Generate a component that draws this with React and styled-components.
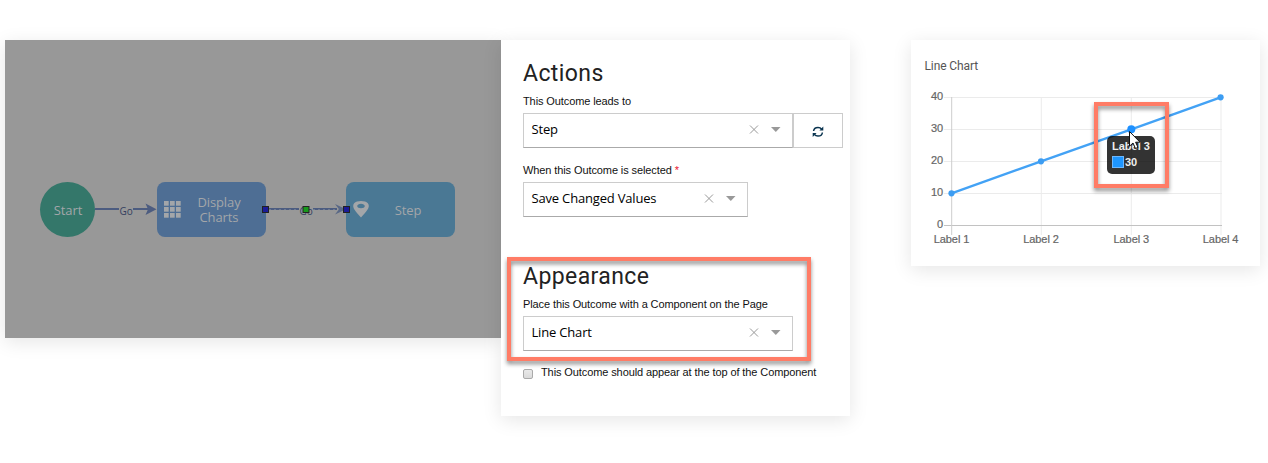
import React from 'react';
import styled, { createGlobalStyle } from 'styled-components';

const GlobalStyle = createGlobalStyle`
  *, *::before, *::after { box-sizing: border-box; }
  body { margin: 0; background: #fff; overflow: hidden; }
`;

const Page = styled.main`
  display: flex;
  align-items: flex-start;
  width: 1268px;
  height: 463px;
  padding: 40px 8px 0 5px;
`;

const Canvas = styled.section`
  position: relative;
  flex: none;
  width: 496px;
  height: 298px;
  background: #989898;
  box-shadow: 0 4px 18px rgba(0, 0, 0, 0.1);
`;

const Node = styled.div`
  position: absolute;
  top: 142px;
  left: ${(p) => p.$x}px;
  width: ${(p) => p.$w}px;
  height: 55px;
  display: flex;
  align-items: center;
  padding-left: ${(p) => (p.$round ? 1 : 7)}px;
  border-radius: ${(p) => (p.$round ? '50%' : '8px')};
  background: ${(p) => p.$color};
  color: #a3a6a9;
  font: 13px/15px 'Open Sans', sans-serif;
  letter-spacing: -0.1px;
`;

const NodeLabel = styled.span`
  flex: 1;
  text-align: center;
  padding: ${(p) => p.$drop || 0}px ${(p) => p.$end || 0}px 0 0;
`;

const Links = styled.svg`
  position: absolute;
  inset: 0;
`;

const FormPanel = styled.section`
  position: relative;
  flex: none;
  display: flex;
  flex-direction: column;
  align-items: flex-start;
  width: 349px;
  height: 376px;
  padding: 19px 7px 0 22px;
  background: #fff;
  box-shadow: 0 4px 18px rgba(0, 0, 0, 0.1);
`;

const Heading = styled.h2`
  margin: ${(p) => p.$top || 0}px 0 0;
  height: 30px;
  font: 400 23px/30px Roboto, sans-serif;
  letter-spacing: 0.4px;
  color: #222;
`;

const FieldLabel = styled.label`
  margin-top: ${(p) => p.$top}px;
  font: 11px/14px 'Liberation Sans', Arial, sans-serif;
  letter-spacing: -0.1px;
  color: #111;
  white-space: nowrap;
`;

const Required = styled.span`
  color: #e8112d;
`;

const FieldRow = styled.div`
  display: flex;
  margin-top: 5px;
`;

const Select = styled.div`
  display: flex;
  align-items: center;
  width: ${(p) => p.$w}px;
  height: 35px;
  padding: 0 11px 2px 7.5px;
  border: 1px solid #ccc;
  border-bottom-color: #aaa;
  background: #fff;
  color: #000;
  font: 13px/18px 'Open Sans', sans-serif;
  letter-spacing: -0.18px;
`;

const SelectValue = styled.span`
  flex: 1;
  padding-bottom: 1px;
`;

const RefreshButton = styled.button`
  display: flex;
  align-items: center;
  justify-content: center;
  width: 50px;
  height: 35px;
  padding: 2px 0 0;
  border: 1px solid #ccc;
  background: #fff;
`;

const CheckRow = styled.label`
  display: flex;
  align-items: flex-start;
  gap: 8px;
  margin-top: 14px;
  font: 11px/14px 'Liberation Sans', Arial, sans-serif;
  letter-spacing: -0.1px;
  color: #111;
  white-space: nowrap;
`;

const Box = styled.span`
  width: 10px;
  height: 10px;
  margin-top: 4px;
  border: 1px solid #aaa;
  border-radius: 2px;
  background: linear-gradient(#e9e9e9, #dadada);
`;

const Highlight = styled.div`
  position: absolute;
  left: ${(p) => p.$x}px;
  top: ${(p) => p.$y}px;
  width: ${(p) => p.$w}px;
  height: ${(p) => p.$h}px;
  border: 4px solid #ff7c66;
  filter: drop-shadow(0 3px 2px rgba(0, 0, 0, 0.45));
  pointer-events: none;
`;

const ChartCard = styled.section`
  position: relative;
  flex: none;
  width: 349px;
  height: 226px;
  margin-left: 61px;
  padding: 18px 0 0 13.5px;
  background: #fff;
  box-shadow: 0 4px 18px rgba(0, 0, 0, 0.1);
`;

const ChartTitle = styled.h3`
  margin: 0;
  font: 400 12px/16px Roboto, sans-serif;
  letter-spacing: -0.1px;
  color: #555;
`;

const Plot = styled.svg`
  display: block;
  margin-left: -13.5px;
  text {
    font: 11px 'Liberation Sans', Arial, sans-serif;
    letter-spacing: -0.08px;
    fill: #666;
    stroke: #666;
    stroke-width: 0.2px;
  }
`;

const Tooltip = styled.div`
  position: absolute;
  left: 196px;
  top: 95.5px;
  width: 48px;
  height: 38px;
  padding: 4px 5px;
  border-radius: 5px;
  background: rgba(0, 0, 0, 0.8);
  color: #eee;
  font: bold 11px/13px 'Liberation Sans', Arial, sans-serif;
  white-space: nowrap;
`;

const TooltipRow = styled.div`
  display: flex;
  align-items: center;
  gap: 1px;
  margin-top: 3px;
`;

const Swatch = styled.span`
  width: 12px;
  height: 12px;
  border: 1px solid #6cb8ff;
  background: #1e96ff;
`;

const Cursor = styled.svg`
  position: absolute;
  left: 217px;
  top: 90px;
`;

function SelectField({ width, children }) {
  return (
    <Select $w={width}>
      <SelectValue>{children}</SelectValue>
      <svg width="32" height="12" viewBox="0 0 32 12">
        <path d="M1 1.500l8 8M9 1.500l-8 8" stroke="#999" fill="none" />
        <path d="M22 3h9.5L26.8 8z" fill="#999" />
      </svg>
    </Select>
  );
}

const GridIcon = () => (
  <svg width="17" height="17" viewBox="0 0 17 17" fill="#a3a6a9">
    {[0, 6, 12].map((y) =>
      [0, 6, 12].map((x) => <rect key={`${x}-${y}`} x={x} y={y} width="4.7" height="4.7" />)
    )}
  </svg>
);

const PinIcon = () => (
  <svg width="16" height="17" viewBox="0 0 16 17">
    <path
      fillRule="evenodd"
      fill="#a3a6a9"
      d="M4 .5Q8-.3 12 .5Q15.8 1.5 15.8 5C15.8 8.3 11.5 12.5 8 16.5C4.5 12.5.2 8.3.2 5Q.2 1.5 4 .5ZM8 2.7C6 2.7 4.2 3.7 4.2 5S6 7.3 8 7.3 11.8 6.3 11.8 5 10 2.7 8 2.7Z"
    />
  </svg>
);

const RefreshIcon = () => (
  <svg width="12" height="12" viewBox="0 0 12 12" fill="none" stroke="#0b3550" strokeWidth="1.5">
    <path d="M1.600 5C1.800 2.800 3.800 1.400 6 1.400c1.500 0 2.800.6 3.600 1.700M10.400 6.500C10.200 8.700 8.200 10.100 6 10.100c-1.500 0-2.800-.6-3.600-1.700" />
    <path d="M11.300.5v4H7.400zM.7 11v-4h3.900z" fill="#0b3550" stroke="none" />
  </svg>
);

const POINTS = [
  [40.5, 153.3],
  [130, 121.3],
  [220.3, 89.3],
  [309.6, 57.3],
];

function LineChart() {
  return (
    <Plot width="349" height="192" viewBox="0 34 349 192">
      <g stroke="#ebebeb">
        {[57.5, 89.5, 121.5, 153.5].map((y) => <path key={y} d={`M33 ${y}H311`} />)}
        {[130.3, 220.3, 310].map((x) => <path key={x} d={`M${x} 57V195`} />)}
      </g>
      <path d="M33 185.500H311" stroke="#c2c2c2" />
      <path d="M40.700 57V195" stroke="#cdcdcd" />
      <polyline points={POINTS.join(' ')} fill="none" stroke="#43a2f5" strokeWidth="2.4" />
      {POINTS.map(([x, y], i) => (
        <circle key={x} cx={x} cy={y} r={i === 2 ? 4 : 3.1} fill={i === 2 ? '#1e90ff' : '#3d9df2'} />
      ))}
      {[40, 30, 20, 10, 0].map((n, i) => (
        <text key={n} x="32" y={60 + i * 32} textAnchor="end">{n}</text>
      ))}
      {POINTS.map(([x], i) => (
        <text key={x} x={x} y="203" textAnchor="middle">{`Label ${i + 1}`}</text>
      ))}
    </Plot>
  );
}

export default function App() {
  return (
    <Page>
      <GlobalStyle />
      <Canvas>
        <Node $x={35} $w={55} $round $color="#34776a">
          <NodeLabel $drop={2}>Start</NodeLabel>
        </Node>
        <Node $x={152} $w={109} $color="#4e6e94">
          <GridIcon />
          <NodeLabel $end={9}>Display<br />Charts</NodeLabel>
        </Node>
        <Node $x={341} $w={109} $color="#4a7894">
          <PinIcon />
          <NodeLabel $drop={2} $end={8}>Step</NodeLabel>
        </Node>
        <Links width="496" height="298">
          <g fill="none" stroke="#4c5c80" strokeWidth="2">
            <path d="M90 169H114M128 169H143" />
            <path d="M262 169H294M308 169H332" strokeWidth="1.8" />
          </g>
          <path d="M264 169.500H294M308 169.500H339" stroke="#7b8598" strokeWidth=".7" strokeDasharray="2 3" />
          <path d="M140.500 163.500L151.500 169.200L140.500 175L143 169.200Z" fill="#4c5c80" />
          <path d="M330 164L341 169.200L330 174.500L334 169.200Z" fill="#596886" />
          <g fill="#343f60" fontFamily="Open Sans, sans-serif" fontSize="10">
            <text x="114.500" y="175">Go</text>
            <text x="294.500" y="175">Go</text>
          </g>
          <g stroke="#222">
            <rect x="257.500" y="166.500" width="6" height="6" fill="#1b1b98" />
            <rect x="338.500" y="166.500" width="6" height="6" fill="#1b1b98" />
            <rect x="298" y="166.500" width="6" height="6" fill="#17981b" />
          </g>
        </Links>
      </Canvas>

      <FormPanel>
        <Heading>Actions</Heading>
        <FieldLabel $top={5}>This Outcome leads to</FieldLabel>
        <FieldRow>
          <SelectField width={270}>Step</SelectField>
          <RefreshButton aria-label="Refresh"><RefreshIcon /></RefreshButton>
        </FieldRow>
        <FieldLabel $top={15}>When this Outcome is selected <Required>*</Required></FieldLabel>
        <FieldRow>
          <SelectField width={225}>Save Changed Values</SelectField>
        </FieldRow>
        <Heading $top={45}>Appearance</Heading>
        <FieldLabel $top={5}>Place this Outcome with a Component on the Page</FieldLabel>
        <FieldRow>
          <SelectField width={270}>Line Chart</SelectField>
        </FieldRow>
        <CheckRow><Box />This Outcome should appear at the top of the Component</CheckRow>
        <Highlight $x={6} $y={217} $w={304} $h={104} />
      </FormPanel>

      <ChartCard>
        <ChartTitle>Line Chart</ChartTitle>
        <LineChart />
        <Tooltip>
          Label 3
          <TooltipRow><Swatch />30</TooltipRow>
        </Tooltip>
        <Highlight $x={183} $y={62} $w={75} $h={86} />
        <Cursor width="14" height="20" viewBox="0 0 14 20">
          <path d="M1.500 1.500V16.200L5 13L7.500 18.500L10 17.400L7.600 12.200H12Z" fill="#fff" stroke="#111" />
        </Cursor>
      </ChartCard>
    </Page>
  );
}
